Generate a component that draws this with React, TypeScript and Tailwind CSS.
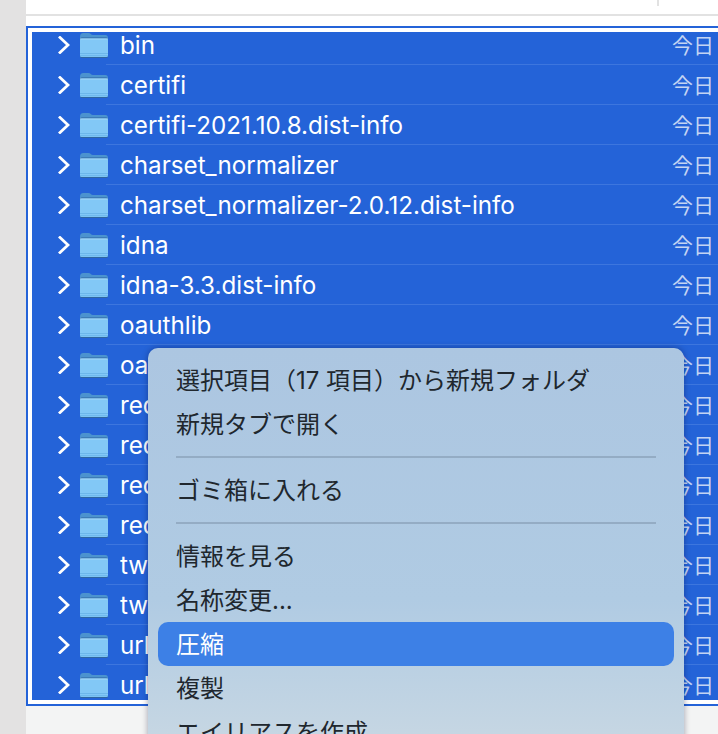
const names = [
  "bin",
  "certifi",
  "certifi-2021.10.8.dist-info",
  "charset_normalizer",
  "charset_normalizer-2.0.12.dist-info",
  "idna",
  "idna-3.3.dist-info",
  "oauthlib",
  "oauthlib-3.1.1.dist-info",
  "requests",
  "requests-2.26.0.dist-info",
  "requests_oauthlib",
  "requests_oauthlib-1.3.0.dist-info",
  "twitter",
  "twitter-3.4.1.dist-info",
  "urllib3",
  "urllib3-1.26.7.dist-info",
];

function Folder() {
  return (
    <svg width="30" height="28" viewBox="0 0 30 28" className="shrink-0">
      <path d="M1 6C1 3.5 2 2 4.5 2H9.5C11.5 2 12 4 14 4H26.5C28 4 29 5 29 7V12H1Z" fill="#4b93cf" />
      <rect x="1" y="6.5" width="28" height="20.5" rx="1.8" fill="#2f66a0" />
      <rect x="1" y="7.5" width="28" height="18.5" rx="1.6" fill="#82c8f6" />
      <rect x="1" y="7.5" width="28" height="1" fill="#a6d9f9" />
      <rect x="1" y="22" width="28" height="1" fill="#6cb6ea" />
      <rect x="1" y="24.2" width="28" height="1" fill="#6cb6ea" />
    </svg>
  );
}

function Row({ name }: { name: string }) {
  return (
    <div className="relative flex h-10 shrink-0 items-center pr-1 pl-[26px]">
      <svg width="12" height="18" viewBox="0 0 12 18" className="shrink-0">
        <path d="M2 1.5L10 9L2 16.5" fill="none" stroke="#ffffff" strokeWidth="2.8" strokeLinecap="square" strokeLinejoin="miter" />
      </svg>
      <div className="ml-[9px]">
        <Folder />
      </div>
      <span className="ml-[11px] flex-1 truncate pt-[2px] text-[24.2px] leading-[32px] text-white">{name}</span>
      <span className="text-[21px] leading-none text-[#c3d4f3]">今日</span>
      <div className="absolute right-0 bottom-0 left-[74px] h-px bg-[#3d76de]" />
    </div>
  );
}

function Item({ label, active }: { label: string; active?: boolean }) {
  return (
    <div
      className={
        active
          ? "flex h-11 shrink-0 items-center rounded-[10px] bg-[#3d80e6] pt-[2px] pl-[18px] text-[24px] leading-none text-white"
          : "flex h-11 shrink-0 items-center rounded-[10px] pt-[2px] pl-[18px] text-[24px] leading-none text-[#20272e]"
      }
    >
      {label}
    </div>
  );
}

function Sep() {
  return <div className="mx-[18px] my-[10px] h-0.5 shrink-0 bg-[#94acc4]" />;
}

export default function App() {
  return (
    <div
      className="relative flex h-[734px] w-[718px] overflow-hidden bg-[#f3f4f4]"
      style={{ fontFamily: '"Inter", "Noto Sans CJK JP", sans-serif' }}
    >
      <div className="w-[26px] shrink-0 bg-[#e3e2e2]" />
      <div className="flex min-w-0 flex-1 flex-col">
        <div className="relative h-[14px] shrink-0 bg-white">
          <div className="absolute top-0 left-[631px] h-[6px] w-0.5 bg-[#e2e2e2]" />
        </div>
        <div className="h-0.5 shrink-0 bg-[#e2e2e2]" />
        <div className="h-[10px] shrink-0 bg-white" />
        <div className="h-[680px] shrink-0 border-y-2 border-l-2 border-[#2463d8] bg-white py-[4px] pl-[4px]">
          <div className="flex h-full flex-col overflow-hidden bg-[#2463d8]">
            <div className="-mt-[7px] flex flex-col">
              {names.map((n) => (
                <Row key={n} name={n} />
              ))}
            </div>
          </div>
        </div>
      </div>

      <div className="absolute top-[348px] left-[148px] flex h-[420px] w-[536px] flex-col rounded-t-[10px] bg-gradient-to-b from-[#acc6e1] via-[#b0cbe3] via-60% to-[#cbd9e3] px-[10px] pt-[10px] shadow-[0_0_6px_rgba(0,0,40,0.35)]">
        <Item label="選択項目（17 項目）から新規フォルダ" />
        <Item label="新規タブで開く" />
        <Sep />
        <Item label="ゴミ箱に入れる" />
        <Sep />
        <Item label="情報を見る" />
        <Item label="名称変更..." />
        <Item label="圧縮" active />
        <Item label="複製" />
        <Item label="エイリアスを作成" />
      </div>
    </div>
  );
}
